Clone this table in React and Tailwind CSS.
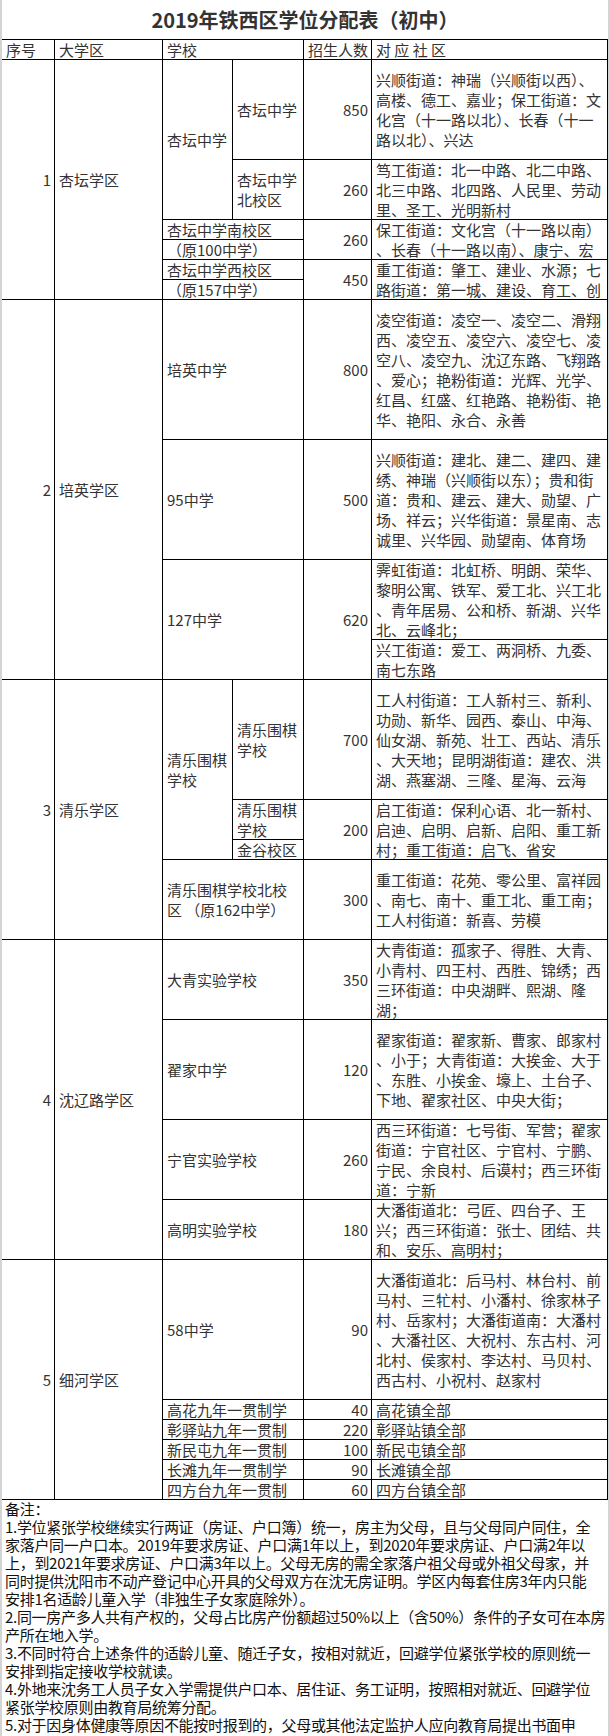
import React from "react";

const Cell = ({ pos, right, lines }) => (
  <div
    className={`${pos} flex flex-col justify-center border-r border-b border-black ${
      right ? "items-end pr-[3px]" : "items-start pl-[4px]"
    }`}
  >
    {lines.map((l, i) => (
      <div key={i} className="whitespace-nowrap">
        {l}
      </div>
    ))}
  </div>
);

const notes = [
  "备注：",
  "1.学位紧张学校继续实行两证（房证、户口簿）统一，房主为父母，且与父母同户同住，全",
  "家落户同一户口本。2019年要求房证、户口满1年以上，到2020年要求房证、户口满2年以",
  "上，到2021年要求房证、户口满3年以上。父母无房的需全家落户祖父母或外祖父母家，并",
  "同时提供沈阳市不动产登记中心开具的父母双方在沈无房证明。学区内每套住房3年内只能",
  "安排1名适龄儿童入学（非独生子女家庭除外）。",
  "2.同一房产多人共有产权的，父母占比房产份额超过50%以上（含50%）条件的子女可在本房",
  "产所在地入学。",
  "3.不同时符合上述条件的适龄儿童、随迁子女，按相对就近，回避学位紧张学校的原则统一",
  "安排到指定接收学校就读。",
  "4.外地来沈务工人员子女入学需提供户口本、居住证、务工证明，按照相对就近、回避学位",
  "紧张学校原则由教育局统筹分配。",
  "5.对于因身体健康等原因不能按时报到的，父母或其他法定监护人应向教育局提出书面申",
];

const App = () => {
  return (
    <div className="w-[610px] h-[1736px] overflow-hidden bg-white border-l-2 border-r-2 border-[#d4d4d4] font-['Noto_Sans_CJK_SC',sans-serif] text-[15px] leading-[20px] text-[#333]">
      <div className="h-[40px] flex items-center justify-center border-b border-black text-[20px] font-bold text-[#333]">
        2019年铁西区学位分配表（初中）
      </div>

      <div className="grid grid-cols-[53px_108px_70px_71px_68px_236px] grid-rows-[20px_100px_60px_20px_20px_20px_20px_140px_120px_80px_40px_120px_40px_20px_80px_80px_100px_80px_60px_140px_20px_20px_20px_20px_20px]">
        {/* header */}
        <Cell pos="col-start-1 row-start-1" lines={["序号"]} />
        <Cell pos="col-start-2 row-start-1" lines={["大学区"]} />
        <Cell pos="col-start-3 col-span-2 row-start-1" lines={["学校"]} />
        <Cell pos="col-start-5 row-start-1" lines={["招生人数"]} />
        <Cell pos="col-start-6 row-start-1" lines={["对 应 社 区"]} />

        {/* 1 杏坛学区 */}
        <Cell pos="col-start-1 row-start-2 row-span-6" right lines={["1"]} />
        <Cell pos="col-start-2 row-start-2 row-span-6" lines={["杏坛学区"]} />
        <Cell pos="col-start-3 row-start-2 row-span-2" lines={["杏坛中学"]} />
        <Cell pos="col-start-4 row-start-2" lines={["杏坛中学"]} />
        <Cell pos="col-start-5 row-start-2" right lines={["850"]} />
        <Cell
          pos="col-start-6 row-start-2"
          lines={[
            "兴顺街道：神瑞（兴顺街以西）、",
            "高楼、德工、嘉业；保工街道：文",
            "化宫（十一路以北）、长春（十一",
            "路以北）、兴达",
          ]}
        />
        <Cell pos="col-start-4 row-start-3" lines={["杏坛中学", "北校区"]} />
        <Cell pos="col-start-5 row-start-3" right lines={["260"]} />
        <Cell
          pos="col-start-6 row-start-3"
          lines={[
            "笃工街道：北一中路、北二中路、",
            "北三中路、北四路、人民里、劳动",
            "里、圣工、光明新村",
          ]}
        />
        <Cell pos="col-start-3 col-span-2 row-start-4" lines={["杏坛中学南校区"]} />
        <Cell pos="col-start-3 col-span-2 row-start-5" lines={["（原100中学）"]} />
        <Cell pos="col-start-5 row-start-4 row-span-2" right lines={["260"]} />
        <Cell
          pos="col-start-6 row-start-4 row-span-2"
          lines={["保工街道：文化宫（十一路以南）", "、长春（十一路以南）、康宁、宏"]}
        />
        <Cell pos="col-start-3 col-span-2 row-start-6" lines={["杏坛中学西校区"]} />
        <Cell pos="col-start-3 col-span-2 row-start-7" lines={["（原157中学）"]} />
        <Cell pos="col-start-5 row-start-6 row-span-2" right lines={["450"]} />
        <Cell
          pos="col-start-6 row-start-6 row-span-2"
          lines={["重工街道：肇工、建业、水源；七", "路街道：第一城、建设、育工、创"]}
        />

        {/* 2 培英学区 */}
        <Cell pos="col-start-1 row-start-8 row-span-4" right lines={["2"]} />
        <Cell pos="col-start-2 row-start-8 row-span-4" lines={["培英学区"]} />
        <Cell pos="col-start-3 col-span-2 row-start-8" lines={["培英中学"]} />
        <Cell pos="col-start-5 row-start-8" right lines={["800"]} />
        <Cell
          pos="col-start-6 row-start-8"
          lines={[
            "凌空街道：凌空一、凌空二、滑翔",
            "西、凌空五、凌空六、凌空七、凌",
            "空八、凌空九、沈辽东路、飞翔路",
            "、爱心；艳粉街道：光辉、光学、",
            "红昌、红盛、红艳路、艳粉街、艳",
            "华、艳阳、永合、永善",
          ]}
        />
        <Cell pos="col-start-3 col-span-2 row-start-9" lines={["95中学"]} />
        <Cell pos="col-start-5 row-start-9" right lines={["500"]} />
        <Cell
          pos="col-start-6 row-start-9"
          lines={[
            "兴顺街道：建北、建二、建四、建",
            "绣、神瑞（兴顺街以东）；贵和街",
            "道：贵和、建云、建大、勋望、广",
            "场、祥云；兴华街道：景星南、志",
            "诚里、兴华园、勋望南、体育场",
          ]}
        />
        <Cell pos="col-start-3 col-span-2 row-start-10 row-span-2" lines={["127中学"]} />
        <Cell pos="col-start-5 row-start-10 row-span-2" right lines={["620"]} />
        <Cell
          pos="col-start-6 row-start-10"
          lines={[
            "霁虹街道：北虹桥、明朗、荣华、",
            "黎明公寓、铁军、爱工北、兴工北",
            "、青年居易、公和桥、新湖、兴华",
            "北、云峰北；",
          ]}
        />
        <Cell
          pos="col-start-6 row-start-11"
          lines={["兴工街道：爱工、两洞桥、九委、", "南七东路"]}
        />

        {/* 3 清乐学区 */}
        <Cell pos="col-start-1 row-start-12 row-span-4" right lines={["3"]} />
        <Cell pos="col-start-2 row-start-12 row-span-4" lines={["清乐学区"]} />
        <Cell pos="col-start-3 row-start-12 row-span-3" lines={["清乐围棋", "学校"]} />
        <Cell pos="col-start-4 row-start-12" lines={["清乐围棋", "学校"]} />
        <Cell pos="col-start-5 row-start-12" right lines={["700"]} />
        <Cell
          pos="col-start-6 row-start-12"
          lines={[
            "工人村街道：工人新村三、新利、",
            "功勋、新华、园西、泰山、中海、",
            "仙女湖、新苑、壮工、西站、清乐",
            "、大天地；昆明湖街道：建农、洪",
            "湖、燕塞湖、三隆、星海、云海",
          ]}
        />
        <Cell pos="col-start-4 row-start-13" lines={["清乐围棋", "学校"]} />
        <Cell pos="col-start-4 row-start-14" lines={["金谷校区"]} />
        <Cell pos="col-start-5 row-start-13 row-span-2" right lines={["200"]} />
        <Cell
          pos="col-start-6 row-start-13 row-span-2"
          lines={[
            "启工街道：保利心语、北一新村、",
            "启迪、启明、启新、启阳、重工新",
            "村；重工街道：启飞、省安",
          ]}
        />
        <Cell
          pos="col-start-3 col-span-2 row-start-15"
          lines={["清乐围棋学校北校", "区 （原162中学）"]}
        />
        <Cell pos="col-start-5 row-start-15" right lines={["300"]} />
        <Cell
          pos="col-start-6 row-start-15"
          lines={[
            "重工街道：花苑、零公里、富祥园",
            "、南七、南十、重工北、重工南；",
            "工人村街道：新喜、劳模",
          ]}
        />

        {/* 4 沈辽路学区 */}
        <Cell pos="col-start-1 row-start-16 row-span-4" right lines={["4"]} />
        <Cell pos="col-start-2 row-start-16 row-span-4" lines={["沈辽路学区"]} />
        <Cell pos="col-start-3 col-span-2 row-start-16" lines={["大青实验学校"]} />
        <Cell pos="col-start-5 row-start-16" right lines={["350"]} />
        <Cell
          pos="col-start-6 row-start-16"
          lines={[
            "大青街道：孤家子、得胜、大青、",
            "小青村、四王村、西胜、锦绣；西",
            "三环街道：中央湖畔、熙湖、隆",
            "湖；",
          ]}
        />
        <Cell pos="col-start-3 col-span-2 row-start-17" lines={["翟家中学"]} />
        <Cell pos="col-start-5 row-start-17" right lines={["120"]} />
        <Cell
          pos="col-start-6 row-start-17"
          lines={[
            "翟家街道：翟家新、曹家、郎家村",
            "、小于；大青街道：大挨金、大于",
            "、东胜、小挨金、壕上、土台子、",
            "下地、翟家社区、中央大街；",
          ]}
        />
        <Cell pos="col-start-3 col-span-2 row-start-18" lines={["宁官实验学校"]} />
        <Cell pos="col-start-5 row-start-18" right lines={["260"]} />
        <Cell
          pos="col-start-6 row-start-18"
          lines={[
            "西三环街道：七号街、军营；翟家",
            "街道：宁官社区、宁官村、宁鹏、",
            "宁民、余良村、后谟村；西三环街",
            "道：宁新",
          ]}
        />
        <Cell pos="col-start-3 col-span-2 row-start-19" lines={["高明实验学校"]} />
        <Cell pos="col-start-5 row-start-19" right lines={["180"]} />
        <Cell
          pos="col-start-6 row-start-19"
          lines={[
            "大潘街道北：弓匠、四台子、王",
            "兴；西三环街道：张士、团结、共",
            "和、安乐、高明村；",
          ]}
        />

        {/* 5 细河学区 */}
        <Cell pos="col-start-1 row-start-20 row-span-6" right lines={["5"]} />
        <Cell pos="col-start-2 row-start-20 row-span-6" lines={["细河学区"]} />
        <Cell pos="col-start-3 col-span-2 row-start-20" lines={["58中学"]} />
        <Cell pos="col-start-5 row-start-20" right lines={["90"]} />
        <Cell
          pos="col-start-6 row-start-20"
          lines={[
            "大潘街道北：后马村、林台村、前",
            "马村、三牤村、小潘村、徐家林子",
            "村、岳家村；大潘街道南：大潘村",
            "、大潘社区、大祝村、东古村、河",
            "北村、侯家村、李达村、马贝村、",
            "西古村、小祝村、赵家村",
          ]}
        />
        <Cell pos="col-start-3 col-span-2 row-start-21" lines={["高花九年一贯制学"]} />
        <Cell pos="col-start-5 row-start-21" right lines={["40"]} />
        <Cell pos="col-start-6 row-start-21" lines={["高花镇全部"]} />
        <Cell pos="col-start-3 col-span-2 row-start-22" lines={["彰驿站九年一贯制"]} />
        <Cell pos="col-start-5 row-start-22" right lines={["220"]} />
        <Cell pos="col-start-6 row-start-22" lines={["彰驿站镇全部"]} />
        <Cell pos="col-start-3 col-span-2 row-start-23" lines={["新民屯九年一贯制"]} />
        <Cell pos="col-start-5 row-start-23" right lines={["100"]} />
        <Cell pos="col-start-6 row-start-23" lines={["新民屯镇全部"]} />
        <Cell pos="col-start-3 col-span-2 row-start-24" lines={["长滩九年一贯制学"]} />
        <Cell pos="col-start-5 row-start-24" right lines={["90"]} />
        <Cell pos="col-start-6 row-start-24" lines={["长滩镇全部"]} />
        <Cell pos="col-start-3 col-span-2 row-start-25" lines={["四方台九年一贯制"]} />
        <Cell pos="col-start-5 row-start-25" right lines={["60"]} />
        <Cell pos="col-start-6 row-start-25" lines={["四方台镇全部"]} />
      </div>

      {/* notes */}
      <div className="pl-[3px] text-[15px] leading-[18px] tracking-[-0.3px] text-[#111]">
        {notes.map((n, i) => (
          <div key={i} className="whitespace-nowrap">
            {n}
          </div>
        ))}
      </div>
    </div>
  );
};

export default App;
